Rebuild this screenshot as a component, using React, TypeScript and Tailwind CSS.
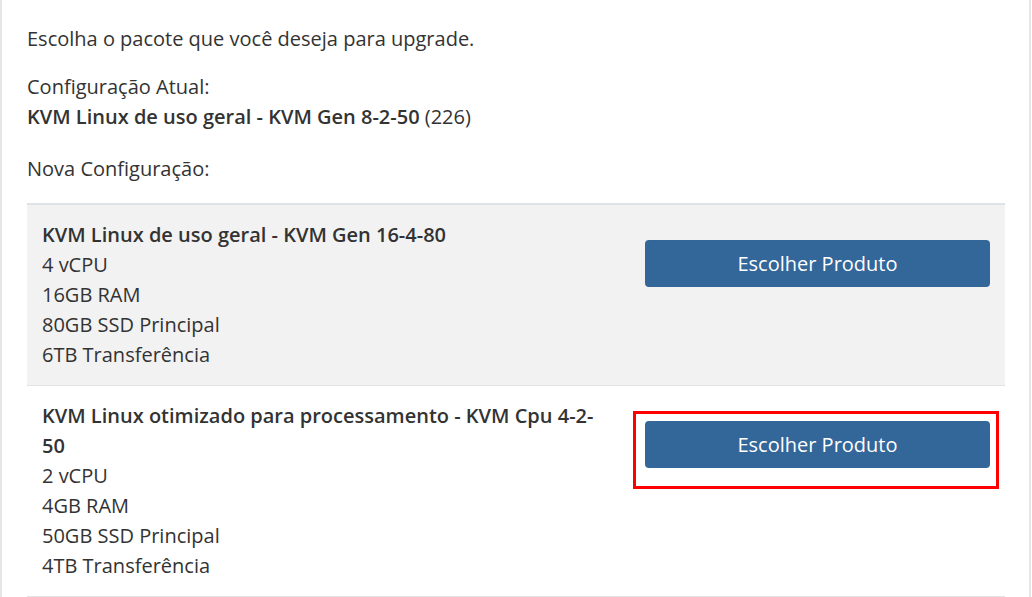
import React from "react";

type Plan = {
  title: string;
  specs: string[];
  highlighted?: boolean;
  shaded?: boolean;
};

const plans: Plan[] = [
  {
    title: "KVM Linux de uso geral - KVM Gen 16-4-80",
    specs: ["4 vCPU", "16GB RAM", "80GB SSD Principal", "6TB Transferência"],
    shaded: true,
  },
  {
    title: "KVM Linux otimizado para processamento - KVM Cpu 4-2-50",
    specs: ["2 vCPU", "4GB RAM", "50GB SSD Principal", "4TB Transferência"],
    highlighted: true,
  },
];

function PlanRow({ plan, first }: { plan: Plan; first: boolean }) {
  return (
    <div
      className={
        (first ? "border-t-2 border-[#dfe3e8] " : "border-t border-[#e3e3e3] ") +
        (plan.shaded ? "bg-[#f2f2f2] " : "bg-white ") +
        "flex gap-[45px] px-[15px] pt-[15px] pb-[15px]"
      }
    >
      <div className="flex-1 min-w-0">
        <div className="font-semibold">{plan.title}</div>
        {plan.specs.map((s) => (
          <div key={s}>{s}</div>
        ))}
      </div>
      <div className="w-[345px] shrink-0 pt-[20px]">
        <div className="relative">
          <button className="h-[47px] w-full rounded-[4px] bg-[#336699] text-white text-[20px] leading-[30px]">
            Escolher Produto
          </button>
          {plan.highlighted && (
            <div className="absolute -left-[12px] -top-[10px] -right-[9px] -bottom-[21px] border-[3px] border-[#ff0000] pointer-events-none" />
          )}
        </div>
      </div>
    </div>
  );
}

export default function App() {
  return (
    <div
      className="w-[1031px] h-[597px] overflow-hidden bg-white border-l-2 border-r-2 border-[#e6e6e6] text-[#333333] text-[20px] leading-[30px]"
      style={{ fontFamily: '"Open Sans", "Noto Sans", sans-serif' }}
    >
      <div className="pl-[25px] pr-[24px] pt-[24px]">
        <p>Escolha o pacote que você deseja para upgrade.</p>

        <div className="mt-[18px]">
          <div>Configuração Atual:</div>
          <div>
            <span className="font-semibold">KVM Linux de uso geral - KVM Gen 8-2-50</span> (226)
          </div>
        </div>

        <p className="mt-[22px]">Nova Configuração:</p>

        <div className="mt-[19px] border-b border-[#e3e3e3]">
          {plans.map((p, i) => (
            <PlanRow key={p.title} plan={p} first={i === 0} />
          ))}
        </div>
      </div>
    </div>
  );
}
